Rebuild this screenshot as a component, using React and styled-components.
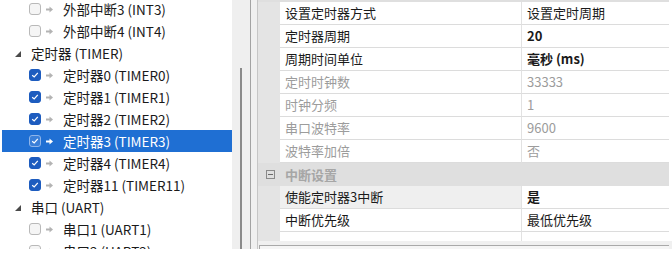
import styled, { createGlobalStyle } from "styled-components";

const GlobalStyle = createGlobalStyle`
  html, body {
    margin: 0;
    padding: 0;
    background: #ffffff;
  }
  body {
    font-family: "Noto Sans CJK SC", "Noto Sans", sans-serif;
    font-size: 13px;
    color: #000;
  }
`;

const Page = styled.div`
  width: 672px;
  height: 268px;
  background: #fff;
  overflow: hidden;
`;

const Window = styled.div`
  display: flex;
  height: 249px;
`;

/* ---------- left tree ---------- */

const TreePane = styled.div`
  width: 232px;
  overflow: hidden;
  background: #fff;
  font-size: 13.5px;
`;

const TreeList = styled.div`
  margin-top: -2px;
`;

const TreeRow = styled.div`
  display: flex;
  align-items: center;
  height: 22px;
  width: 230px;
  margin-left: 2px;
  padding-left: ${(p) => (p.$group ? 13 : 27)}px;
  box-sizing: border-box;
  background: ${(p) => (p.$selected ? "#1f6fd3" : "transparent")};
  color: ${(p) => (p.$selected ? "#fff" : "#1a1a1a")};
  white-space: nowrap;
`;

const Expander = styled.svg`
  width: 6px;
  height: 6px;
  margin-right: 10px;
  margin-top: 2px;
  flex: none;
`;

const Check = styled.span`
  display: flex;
  align-items: center;
  justify-content: center;
  width: 12px;
  height: 12px;
  box-sizing: border-box;
  border-radius: 3px;
  flex: none;
  border: 1px solid
    ${(p) => (p.$selected ? "#8fb5ea" : p.$checked ? "#1d5cbf" : "#b9b9b9")};
  background: ${(p) =>
    p.$selected ? "#3a7fd8" : p.$checked ? "#1d5cbf" : "#f5f5f5"};
`;

const Arrow = styled.svg`
  width: 7px;
  height: 7px;
  margin-left: 5px;
  margin-right: 10px;
  flex: none;
`;

const TreeScroll = styled.div`
  width: 18px;
  background: #efefef;
  display: flex;
  flex-direction: column;
`;

const Thumb = styled.div`
  width: 2px;
  margin: 68px 0 0 8px;
  flex: 1;
  background: #8a8a8a;
`;

const Splitter = styled.div`
  width: 8px;
  box-sizing: border-box;
  border-left: 1px solid #a3a3a3;
  border-right: 1px solid #c6c6c6;
  background: #f0f0f0;
`;

/* ---------- property grid ---------- */

const PropPane = styled.div`
  width: 414px;
  display: flex;
  flex-direction: column;
  background: #fff;
`;

const GridArea = styled.div`
  height: 241px;
  width: 411px;
  overflow: hidden;
  background: #e4e4e4;
`;

const GridList = styled.div`
  margin-top: -21px;
`;

const PropRow = styled.div`
  display: grid;
  grid-template-columns: 22px 242px 147px;
  height: 23px;
`;

const Margin = styled.div`
  display: flex;
  align-items: center;
  justify-content: center;
`;

const NameCell = styled.div`
  box-sizing: border-box;
  border-bottom: 1px solid #dcdcdc;
  border-right: 1px solid #e2e2e2;
  padding-left: 5px;
  line-height: 22px;
  background: ${(p) => (p.$active ? "#efefef" : "#fff")};
  color: ${(p) => (p.$disabled ? "#9c9c9c" : "#1a1a1a")};
  white-space: nowrap;
`;

const ValueCell = styled.div`
  box-sizing: border-box;
  border-bottom: 1px solid #dcdcdc;
  padding-left: 5px;
  line-height: 22px;
  background: #fff;
  color: ${(p) => (p.$disabled ? "#9c9c9c" : "#1a1a1a")};
  font-weight: ${(p) => (p.$bold ? 700 : 400)};
  white-space: nowrap;
`;

const CategoryRow = styled.div`
  display: grid;
  grid-template-columns: 22px 389px;
  height: 23px;
  background: #dfdfdf;
`;

const CategoryLabel = styled.div`
  padding-left: 5px;
  line-height: 23px;
  font-weight: 700;
  color: #a6a6a6;
`;

const Collapse = styled.svg`
  width: 9px;
  height: 9px;
  margin-left: 2px;
`;

const Description = styled.div`
  flex: 1;
  background: #f0f0f0;
  padding-top: 4px;
  padding-left: 1px;
  display: flex;
`;

const DescBox = styled.div`
  flex: 1;
  margin-right: 3px;
  border-top: 1px solid #a9a9a9;
  border-left: 1px solid #a9a9a9;
  background: #f5f5f5;
`;

const treeRows = [
  { label: "外部中断3 (INT3)" },
  { label: "外部中断4 (INT4)" },
  { label: "定时器 (TIMER)", group: true },
  { label: "定时器0 (TIMER0)", checked: true },
  { label: "定时器1 (TIMER1)", checked: true },
  { label: "定时器2 (TIMER2)", checked: true },
  { label: "定时器3 (TIMER3)", checked: true, selected: true },
  { label: "定时器4 (TIMER4)", checked: true },
  { label: "定时器11 (TIMER11)", checked: true },
  { label: "串口 (UART)", group: true },
  { label: "串口1 (UART1)" },
  { label: "串口2 (UART2)" },
];

const timerProps = [
  { name: "设置定时器方式", value: "设置定时周期" },
  { name: "定时器周期", value: "20", bold: true },
  { name: "周期时间单位", value: "毫秒 (ms)", bold: true },
  { name: "定时时钟数", value: "33333", disabled: true },
  { name: "时钟分频", value: "1", disabled: true },
  { name: "串口波特率", value: "9600", disabled: true },
  { name: "波特率加倍", value: "否", disabled: true },
];

const irqProps = [
  { name: "使能定时器3中断", value: "是", bold: true, active: true },
  { name: "中断优先级", value: "最低优先级" },
];

function TreeItem({ row }) {
  if (row.group) {
    return (
      <TreeRow $group>
        <Expander viewBox="0 0 6 6">
          <polygon points="6,0 6,6 0,6" fill="#4a4a4a" />
        </Expander>
        {row.label}
      </TreeRow>
    );
  }
  const arrowFill = row.selected ? "#fff" : "#b3b3b3";
  return (
    <TreeRow $selected={row.selected}>
      <Check $checked={row.checked} $selected={row.selected}>
        {row.checked && (
          <svg width="8" height="8" viewBox="0 0 8 8">
            <path
              d="M1.2 4.2 L3.2 6 L6.8 1.8"
              fill="none"
              stroke="#fff"
              strokeWidth="1.2"
            />
          </svg>
        )}
      </Check>
      <Arrow viewBox="0 0 7 7">
        <rect x="0" y="2.5" width="4" height="2" fill={arrowFill} />
        <polygon points="3.5,0.5 7,3.5 3.5,6.5" fill={arrowFill} />
      </Arrow>
      {row.label}
    </TreeRow>
  );
}

function Prop({ p }) {
  return (
    <PropRow>
      <Margin />
      <NameCell $disabled={p.disabled} $active={p.active}>
        {p.name}
      </NameCell>
      <ValueCell $disabled={p.disabled} $bold={p.bold}>
        {p.value}
      </ValueCell>
    </PropRow>
  );
}

export default function App() {
  return (
    <Page>
      <GlobalStyle />
      <Window>
        <TreePane>
          <TreeList>
            {treeRows.map((r) => (
              <TreeItem key={r.label} row={r} />
            ))}
          </TreeList>
        </TreePane>
        <TreeScroll>
          <Thumb />
        </TreeScroll>
        <Splitter />
        <PropPane>
          <GridArea>
            <GridList>
              <CategoryRow>
                <Margin />
                <CategoryLabel />
              </CategoryRow>
              {timerProps.map((p) => (
                <Prop key={p.name} p={p} />
              ))}
              <CategoryRow>
                <Margin>
                  <Collapse viewBox="0 0 9 9">
                    <rect x="0.5" y="0.5" width="8" height="8" fill="none" stroke="#8a8a8a" />
                    <rect x="2" y="4" width="5" height="1" fill="#6a6a6a" />
                  </Collapse>
                </Margin>
                <CategoryLabel>中断设置</CategoryLabel>
              </CategoryRow>
              {irqProps.map((p) => (
                <Prop key={p.name} p={p} />
              ))}
              <Prop p={{ name: "", value: "" }} />
            </GridList>
          </GridArea>
          <Description>
            <DescBox />
          </Description>
        </PropPane>
      </Window>
    </Page>
  );
}
